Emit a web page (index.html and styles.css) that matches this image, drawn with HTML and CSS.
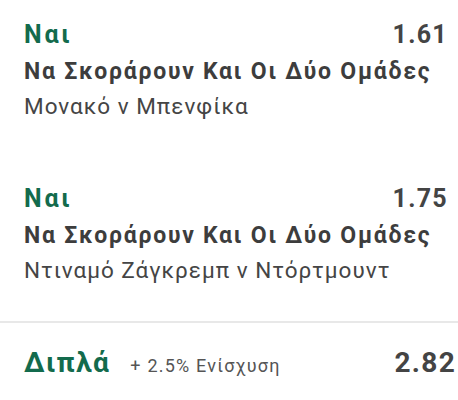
FILE: index.html
```html
<!DOCTYPE html>
<html lang="el">
<head>
<meta charset="utf-8">
<link rel="stylesheet" href="styles.css">
</head>
<body>
<div class="slip">
  <div class="leg">
    <div class="leg-top">
      <span class="pick">Ναι</span>
      <span class="odds">1.61</span>
    </div>
    <div class="market">Να Σκοράρουν Και Οι Δύο Ομάδες</div>
    <div class="event">Μονακό ν Μπενφίκα</div>
  </div>
  <div class="leg leg-second">
    <div class="leg-top">
      <span class="pick">Ναι</span>
      <span class="odds">1.75</span>
    </div>
    <div class="market">Να Σκοράρουν Και Οι Δύο Ομάδες</div>
    <div class="event">Ντιναμό Ζάγκρεμπ ν Ντόρτμουντ</div>
  </div>
  <div class="total">
    <span class="total-label">Διπλά</span>
    <span class="boost">+ 2.5% Ενίσχυση</span>
    <span class="total-odds">2.82</span>
  </div>
</div>
</body>
</html>
```
FILE: styles.css
```css
html, body {
  margin: 0;
  padding: 0;
  background: #ffffff;
}
body {
  font-family: Roboto, "Noto Sans", sans-serif;
  color: #3d3d3d;
}
.slip {
  width: 458px;
  height: 400px;
  overflow: hidden;
}
.leg {
  padding: 18px 10px 0 24px;
}
.leg-second {
  padding-top: 59px;
}
.leg-top {
  display: flex;
  justify-content: space-between;
  align-items: baseline;
  height: 34px;
}
.pick {
  font-size: 25px;
  font-weight: 700;
  color: #136b4d;
  line-height: 34px;
  letter-spacing: 2.8px;
}
.odds {
  font-size: 25px;
  font-weight: 700;
  color: #444444;
  line-height: 34px;
  letter-spacing: 1.3px;
}
.market {
  font-size: 23px;
  font-weight: 700;
  color: #3d3d3d;
  line-height: 34px;
  margin-top: 3px;
  letter-spacing: 1.75px;
  white-space: nowrap;
}
.event {
  font-size: 22.5px;
  font-weight: 400;
  color: #454545;
  line-height: 34px;
  letter-spacing: 1px;
  white-space: nowrap;
}
.total {
  margin-top: 34px;
  border-top: 2px solid #e8e8e8;
  display: flex;
  align-items: baseline;
  padding: 20px 2px 0 24px;
}
.total-label {
  font-size: 28px;
  font-weight: 700;
  color: #136b4d;
  line-height: 40px;
  letter-spacing: 1.5px;
}
.boost {
  font-size: 18px;
  color: #555555;
  margin-left: 20px;
  letter-spacing: 1.2px;
}
.total-odds {
  margin-left: auto;
  font-size: 28px;
  font-weight: 700;
  color: #444444;
  line-height: 40px;
  letter-spacing: 1.3px;
}
```
